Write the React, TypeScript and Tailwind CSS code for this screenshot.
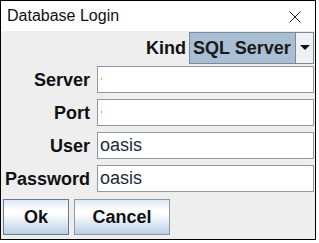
import React from "react";

const font = { fontFamily: '"Liberation Sans", Arial, sans-serif' };

function Field({ value, caret }: { value?: string; caret?: boolean }) {
  return (
    <div className="relative h-[27px] border border-[#8d99a5] bg-white shadow-[inset_1px_1px_0_#ffffff] flex items-center pl-[2px] text-[18px] text-[#1c2a3a]">
      {value}
      {caret && <span className="absolute left-[3px] top-[11px] w-[1px] h-[2px] bg-[#f0a040]" />}
    </div>
  );
}

function Label({ children }: { children: React.ReactNode }) {
  return <div className="text-right font-bold text-[18px] text-[#111] leading-none">{children}</div>;
}

export default function App() {
  return (
    <div className="w-[319px] h-[243px] bg-white" style={font}>
      <div className="w-[316px] h-[240px] border border-black flex flex-col bg-[#eeeeee]">
        <div className="h-[30px] bg-white flex items-center justify-between pl-[6px] pr-[14px]">
          <span className="text-[16px] text-[#111] leading-none">Database Login</span>
          <svg width="12" height="12" viewBox="0 0 12 12" className="mt-[1px]">
            <path d="M0.5 0.5 L11.5 11.5 M11.5 0.5 L0.5 11.5" stroke="#222" strokeWidth="1" />
          </svg>
        </div>
        <div className="flex flex-col pl-[2px] pr-[1px]">
          <div className="flex items-center justify-end gap-[3px] h-[32px] mt-[1px]">
            <span className="font-bold text-[18px] text-[#111]">Kind</span>
            <div className="w-[125px] h-[32px] border border-[#7a8a99] flex">
              <div className="flex-1 bg-[#a9bed3] flex items-center pl-[3px] font-bold text-[18px] text-[#1a1a1a] border-r border-[#7a8a99]">
                SQL Server
              </div>
              <div className="w-[17px] bg-[#eef2f6] flex items-center justify-center">
                <svg width="10" height="6" viewBox="0 0 10 6">
                  <path d="M0 0 L10 0 L5 5 Z" fill="#111" />
                </svg>
              </div>
            </div>
          </div>
          <div className="grid grid-cols-[87px_1fr] gap-x-[7px] gap-y-[6px] items-center mt-[2px]">
            <Label>Server</Label>
            <Field caret />
            <Label>Port</Label>
            <Field caret />
            <Label>User</Label>
            <Field value="oasis" />
            <Label>Password</Label>
            <Field value="oasis" />
          </div>
          <div className="flex gap-[5px] mt-[7px]">
            <button className="w-[66px] h-[36px] border border-[#6a7a8a] font-bold text-[18px] text-[#111] bg-[linear-gradient(to_bottom,#dde8f3_0%,#ffffff_30%,#ffffff_40%,#b8cfe5_100%)]">
              Ok
            </button>
            <button className="w-[96px] h-[36px] border border-[#8d99a5] font-bold text-[18px] text-[#111] bg-[linear-gradient(to_bottom,#dde8f3_0%,#ffffff_30%,#ffffff_40%,#b8cfe5_100%)]">
              Cancel
            </button>
          </div>
        </div>
      </div>
    </div>
  );
}
